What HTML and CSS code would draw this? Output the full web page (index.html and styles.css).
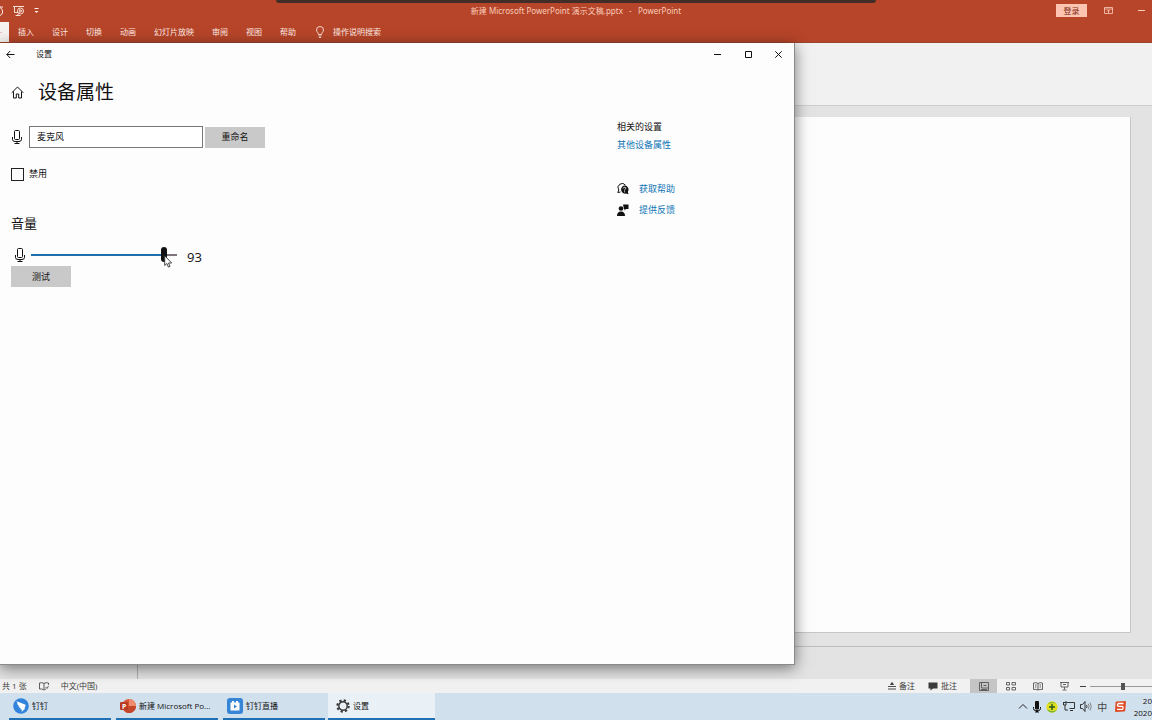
FILE: index.html
```html
<!DOCTYPE html>
<html lang="zh-CN">
<head>
<meta charset="utf-8">
<title>设置</title>
<link rel="stylesheet" href="styles.css">
</head>
<body>
<div class="desktop">
  <div class="recorder-bar"></div>
  <div class="ppt">
    <header class="ppt-title">
      <div class="quick">
        <svg class="undo" width="4" height="12" viewBox="0 0 4 12"><path d="M0 2.500Q3 4 2.600 7T0 10.500M0 2h3" fill="none" stroke="currentColor"/></svg>
        <svg width="12" height="12" viewBox="0 0 12 12" fill="none" stroke="currentColor" stroke-width=".9"><path d="M0 1.500h11M1.500 1.500v6H5M6 8.500 3.500 11M2.500 10.500h5"/><circle cx="7.500" cy="6" r="3"/><path d="M6.700 4.500v3L9 6z"/></svg>
        <svg width="5" height="6" viewBox="0 0 5 6"><path d="M.5 0h4v1h-4zM.5 3h4l-2 2z" fill="currentColor"/></svg>
      </div>
      <h1 class="doc-name">新建 Microsoft PowerPoint 演示文稿.pptx&nbsp;&nbsp; -&nbsp;&nbsp; PowerPoint</h1>
      <div class="ppt-controls">
        <button class="login">登录</button>
        <button class="plain" aria-label="功能区显示选项"><svg width="9" height="7" viewBox="0 0 9 7" fill="none" stroke="currentColor"><path d="M.5.500h8v6h-8zM0 2h9M4.500 6V3M3 4.500 4.500 3 6 4.500" stroke-width=".8"/></svg></button>
        <button class="plain" aria-label="最小化"><svg width="7" height="7" viewBox="0 0 7 7"><path d="M0 3.500h7" stroke="currentColor"/></svg></button>
      </div>
    </header>
    <nav class="tabs">
      <span class="tab-current">·</span>
      <a href="#">插入</a><a href="#">设计</a><a href="#">切换</a><a href="#">动画</a><a href="#">幻灯片放映</a><a href="#">审阅</a><a href="#">视图</a><a href="#">帮助</a>
      <a href="#" class="tell"><svg width="8" height="12" viewBox="0 0 8 12" fill="none" stroke="currentColor" stroke-width=".9"><path d="M2.500 8.500c0-2-2-2.500-2-4.500a3.500 3.500 0 0 1 7 0c0 2-2 2.500-2 4.500zM2.500 10h3M3 11.500h2"/></svg>操作说明搜索</a>
    </nav>
    <div class="ribbon"></div>
    <main class="workspace">
      <div class="thumbs"></div>
      <div class="editor">
        <div class="canvas"><div class="slide"></div></div>
        <div class="notes"></div>
      </div>
    </main>
    <footer class="status">
      <div class="status-left">
        <span>共 1 张</span>
        <svg width="10" height="9" viewBox="0 0 10 9" fill="none" stroke="currentColor" stroke-width=".8"><path d="M5 1.500v6M5 1.500Q3 0 .5 1v6Q3 6.500 5 8l2-1M5 1.500Q7 0 9.500 1v2M6.500 5 8 6.500 9.500 4"/></svg>
        <span>中文(中国)</span>
      </div>
      <div class="status-right">
        <button class="plain"><svg width="8" height="8" viewBox="0 0 8 8" stroke="currentColor" stroke-width=".9"><path d="M0 4.500h8M0 7h8M4 .5 2.500 2.500h3z" fill="currentColor"/></svg>备注</button>
        <button class="plain"><svg width="10" height="9" viewBox="0 0 10 9"><path d="M.5.500h9v6H5L2.500 8.500v-2h-2z" fill="currentColor"/></svg>批注</button>
        <div class="views">
          <button class="plain view on" aria-label="普通视图"><svg width="10" height="9" viewBox="0 0 10 9" fill="none" stroke="currentColor" stroke-width=".9"><path d="M.5.500h9v8h-9zM2.500 1v5h7M4.500 3.500h3M2 7.500h6"/></svg></button>
          <button class="plain view" aria-label="幻灯片浏览"><svg width="10" height="9" viewBox="0 0 10 9" fill="none" stroke="currentColor" stroke-width=".9"><path d="M.5.500h3v2.500h-3zM6 .5h3.500v2.500H6zM.5 5.500h3V8h-3zM6 5.500h3.500V8H6z"/></svg></button>
          <button class="plain view" aria-label="阅读视图"><svg width="10" height="9" viewBox="0 0 10 9" fill="none" stroke="currentColor" stroke-width=".9"><path d="M5 1.500Q3 0 .5 1v6.500Q3 7 5 8q2-1 4.500-.5V1Q7 0 5 1.500V8M2 3h1.500M2 5h1.500M6.500 3H8M6.500 5H8"/></svg></button>
          <button class="plain view" aria-label="幻灯片放映"><svg width="9" height="9" viewBox="0 0 9 9" fill="none" stroke="currentColor" stroke-width=".9"><path d="M0 .5h9M1 .5V5h7V.5M4.500 5v2.500M2.500 8h4M3 2.500h3"/></svg></button>
        </div>
        <button class="plain" aria-label="缩小"><svg width="6" height="7" viewBox="0 0 6 7"><path d="M0 3.500h6" stroke="currentColor"/></svg></button>
        <input class="zoom" type="range" min="0" max="100" value="54" aria-label="缩放">
      </div>
    </footer>
  </div>

  <section class="settings">
    <div class="win-bar">
      <button class="plain" aria-label="返回"><svg width="9" height="9" viewBox="0 0 9 9" fill="none" stroke="currentColor"><path d="M8.500 4.500H.8M4.200 1 .8 4.500 4.200 8"/></svg></button>
      <span class="win-name">设置</span>
      <div class="win-controls">
        <button class="plain" aria-label="最小化"><svg width="7" height="7" viewBox="0 0 7 7"><path d="M0 3.500h7" stroke="currentColor"/></svg></button>
        <button class="plain" aria-label="最大化"><svg width="7" height="7" viewBox="0 0 7 7"><path d="M.5.500h6v6h-6z" fill="none" stroke="currentColor"/></svg></button>
        <button class="plain" aria-label="关闭"><svg width="7" height="7" viewBox="0 0 7 7"><path d="M.3.300l6.400 6.400M6.700.300.300 6.700" stroke="currentColor"/></svg></button>
      </div>
    </div>
    <div class="page-head">
      <svg width="13" height="13" viewBox="0 0 13 13" fill="none" stroke="currentColor"><path d="M.7 6.800 6.500 1l5.800 5.800M2.500 5.500v6.500h2.800V8h2.400v4h2.800V5.500"/></svg>
      <h2>设备属性</h2>
    </div>
    <div class="columns">
      <div class="device">
        <div class="name-row">
          <label for="name"><svg width="12" height="16" viewBox="0 0 12 16" fill="none" stroke="currentColor"><rect x="3.500" y="1.500" width="5" height="9" rx="1"/><path d="M1.500 8v2.500q0 2 2.500 2h4q2.500 0 2.500-2V8M6 12.500V15M3.500 14.500h5"/></svg></label>
          <input id="name" type="text" value="麦克风">
          <button class="btn">重命名</button>
        </div>
        <label class="check"><input type="checkbox">禁用</label>
        <h3>音量</h3>
        <div class="vol-row">
          <label for="vol"><svg width="12" height="16" viewBox="0 0 12 16" fill="none" stroke="currentColor"><rect x="3.500" y="1.500" width="5" height="9" rx="1"/><path d="M1.500 8v2.500q0 2 2.500 2h4q2.500 0 2.500-2V8M6 12.500V15M3.500 14.500h5"/></svg></label>
          <div class="slide-wrap">
            <input id="vol" class="vol" type="range" min="0" max="100" value="93">
            <svg class="cursor" width="9" height="13" viewBox="0 0 9 13"><path d="M.7.800v9.700l2.200-2 1.500 3.600 1.600-.7L4.500 8h3.200z" fill="#fff" stroke="#333" stroke-width=".9"/></svg>
          </div>
          <output for="vol">93</output>
        </div>
        <button class="btn">测试</button>
      </div>
      <aside class="related">
        <h4>相关的设置</h4>
        <a href="#">其他设备属性</a>
        <ul>
          <li><svg width="12" height="12" viewBox="0 0 12 12"><path d="M8.500 2.200A4 4 0 1 0 1.800 7L.8 9.500 3.500 9" fill="none" stroke="#111"/><path d="M7.500 2.500a4 4 0 0 1 3.300 6.300l.7 2.500-2.500-.7A4 4 0 1 1 7.500 2.500" fill="#111"/><path d="M6.200 5.500q.3-1.300 1.500-1.200 1.300.2 1 1.300-.2.600-1.100 1.200V7.500M7.600 8.300v1" fill="none" stroke="#fff" stroke-width=".9"/></svg><a href="#">获取帮助</a></li>
          <li><svg width="12" height="12" viewBox="0 0 12 12" fill="#111"><circle cx="4" cy="4.500" r="2.300"/><path d="M0 12q0-4.500 4-4.500T8 12zM6 .5h5.500v4.500H9L7.500 6.500V5H7z"/></svg><a href="#">提供反馈</a></li>
        </ul>
      </aside>
    </div>
  </section>
</div>

<footer class="taskbar">
  <div class="tasks">
    <button class="task"><svg width="16" height="16" viewBox="0 0 16 16"><circle cx="8" cy="8" r="7.800" fill="#3183dc"/><path d="M3.500 3.300 12 6.500q1 .5.500 1.500l-1.200 2.200h1.200L8.500 14l.5-2.500H7.300l.5-1.200Q5.500 9.500 5.300 8.300l1.500.2Q4.300 7 4 5.300l1 .2Q3.500 4.300 3.500 3.300" fill="#fff"/></svg><span>钉钉</span></button>
    <button class="task"><svg width="16" height="16" viewBox="0 0 16 16"><circle cx="9" cy="8" r="7" fill="#d85435"/><path d="M9 1a7 7 0 0 1 7 7H9z" fill="#f08c6c"/><path d="M16 8a7 7 0 0 1-11 5.700L9 8z" fill="#c5472b"/><rect y="4" width="8" height="8" rx="1" fill="#b93a20"/><text x="2" y="10.500" class="p-mark">P</text></svg><span>新建 Microsoft Po...</span></button>
    <button class="task"><svg width="16" height="16" viewBox="0 0 16 16"><rect width="16" height="16" rx="3" fill="#3685d6"/><path d="M3.500 4.500h9v8h-9zM5 3h2v2H5zM9 3h2v2H9z" fill="#fff"/><path d="M7 6.500v4l3-2z" fill="#3685d6"/></svg><span>钉钉直播</span></button>
    <button class="task active"><svg width="14" height="14" viewBox="0 0 14 14" fill="none" stroke="#333"><circle cx="7" cy="7" r="5.700" stroke-width="2" stroke-dasharray="2.240 2.240"/><circle cx="7" cy="7" r="4.200" stroke-width="1.400"/></svg><span>设置</span></button>
  </div>
  <div class="tray">
    <svg width="10" height="7" viewBox="0 0 10 7"><path d="M1 5.500 5 1.500l4 4" fill="none" stroke="#222"/></svg>
    <svg width="8" height="12" viewBox="0 0 8 12"><rect x="2" y="0" width="4" height="8.500" rx="1" fill="#111"/><path d="M.5 6v1.500q0 2 2 2h3q2 0 2-2V6M2 11h4" fill="none" stroke="#111"/><path d="M4 9v2" stroke="#111" stroke-width="2"/></svg>
    <svg width="12" height="12" viewBox="0 0 12 12"><circle cx="6" cy="6" r="5.700" fill="#e3e01f"/><path d="M1 8.500A5.700 5.700 0 0 0 11 8.500Q8 10.500 6 10T1 8.500M2 3Q5-.5 10 2.500L6.500 2z" fill="#7bb535"/><path d="M6 3v6M3 6h6" stroke="#26551c" stroke-width="1.400"/></svg>
    <svg width="12" height="11" viewBox="0 0 12 11" fill="none" stroke="#222" stroke-width=".9"><path d="M3.500 1.500h8v6h-5M0 1.500h3M.5 1.500v2.500h2.500V0M2 4v5M2 9h3M7 9.500h3"/></svg>
    <svg width="12" height="11" viewBox="0 0 12 11" fill="none" stroke="#222" stroke-width=".9"><path d="M.5 3.500h2l2.500-3v10l-2.500-3h-2zM6.500 4q1 1.500 0 3"/><path d="M8.200 2.800q1.800 2.700 0 5.400M10 1.500q2.500 4 0 8" stroke="#777"/></svg>
    <span class="ime">中</span>
    <svg width="11" height="11" viewBox="0 0 11 11"><path d="M1.500.5 10 0q1 0 1 1l-.8 8.500q0 1-1 1L1 11q-1 0-1-1l.5-8.500q0-1 1-1" fill="#df4c27"/><path d="M8.500 2.500H4Q2.500 2.500 2.500 4T4 5.300h3Q8.300 5.300 8 7T6.500 8.300H2" fill="none" stroke="#fff" stroke-width="1.300"/></svg>
    <div class="clock"><span>20</span><span>2020</span></div>
  </div>
</footer>
</body>
</html>
```
FILE: styles.css
```css
* { box-sizing: border-box; }
body {
  margin: 0;
  height: 100vh;
  overflow: hidden;
  display: flex;
  flex-direction: column;
  font: 8px/12px "Open Sans", "Noto Sans CJK SC", sans-serif;
  color: #222;
}
h1, h2, h3, h4, ul { margin: 0; padding: 0; font-weight: 400; list-style: none; }
button, input { font: inherit; color: inherit; margin: 0; }
a { text-decoration: none; color: inherit; }
svg { flex: none; display: block; }
.plain {
  border: 0;
  padding: 0;
  background: none;
  display: flex;
  align-items: center;
  justify-content: center;
  gap: 3px;
}
.desktop { flex: 1; position: relative; display: flex; min-height: 0; }
.recorder-bar {
  position: absolute;
  z-index: 1;
  top: 0;
  left: 24%;
  right: 24%;
  height: 3px;
  background: #432d29;
  border-radius: 0 0 3px 3px;
}

.ppt { flex: 1; display: flex; flex-direction: column; min-width: 0; background: #e3e3e3; }
.ppt-title {
  height: 22px;
  display: grid;
  grid-template-columns: 1fr auto 1fr;
  align-items: center;
  padding-bottom: 1px;
  background: #b64529;
  color: #fccdbb;
}
.quick { display: flex; align-items: center; gap: 9px; color: #fff0ea; }
.doc-name { font-family: "Noto Sans", "Noto Sans CJK SC", sans-serif; font-size: 8px; white-space: nowrap; }
.ppt-controls { display: flex; justify-content: flex-end; align-items: center; gap: 17px; }
.ppt-controls .plain:last-child { width: 22px; }
.login { width: 31px; height: 13px; padding: 0; border: 0; background: #fcc4b1; color: #7c2b17; line-height: 12px; }
.tabs {
  height: 21px;
  display: flex;
  align-items: center;
  gap: 18px;
  background: #b64529;
  color: #ffeae2;
  border-bottom: 1px solid #9d4530;
  white-space: nowrap;
}
.tab-current { align-self: stretch; width: 9px; margin-right: -9px; background: #f5f2f0; color: #b64529; line-height: 20px; }
.tell { display: flex; align-items: center; gap: 9px; margin-left: 2px; }
.ribbon { height: 63px; background: #f1f1f1; border-bottom: 1px solid #cfcfcf; }
.workspace { flex: 1; display: flex; min-height: 0; }
.thumbs { width: 138px; border-right: 1px solid #b0b0b0; }
.editor { flex: 1; display: flex; flex-direction: column; }
.canvas { flex: 1; display: flex; padding: 11px 21px 13px; border-bottom: 1px solid #bdbdbd; }
.slide { flex: 1; background: #fdfdfd; border: 1px solid #c6c6c6; border-width: 0 1px 1px 0; }
.notes { height: 32px; }
.status {
  height: 14px;
  display: flex;
  align-items: center;
  justify-content: space-between;
  background: #f1f1f1;
  color: #3b3b3b;
}
.status-left { display: flex; align-items: center; gap: 12px; padding-left: 2px; }
.status-right { display: flex; align-items: center; align-self: stretch; gap: 13px; }
.views { display: flex; align-self: stretch; margin-right: -11px; }
.view { width: 27px; color: #555; }
.view.on { background: #c5c5c5; }
.zoom { width: 62px; height: 10px; margin-left: -9px; appearance: none; background: none; }
.zoom::-webkit-slider-runnable-track { height: 1px; background: #999; }
.zoom::-webkit-slider-thumb { appearance: none; width: 4px; height: 7px; margin-top: -3px; background: #555; }

.settings {
  position: absolute;
  z-index: 2;
  left: 0;
  top: 43px;
  bottom: 28px;
  width: 69%;
  background: #fdfdfd;
  border: 1px solid #8a8a8a;
  border-width: 0 1px 1px 0;
  box-shadow: 0 3px 14px rgba(0, 0, 0, .5);
  color: #111;
  font-size: 9px;
}
.win-bar { height: 22px; padding-left: 6px; display: flex; align-items: center; }
.win-name { flex: 1; margin-left: 21px; font-size: 8px; }
.win-controls { display: flex; }
.win-controls .plain { width: 31px; height: 22px; }
.win-controls .plain:last-child { width: 30px; }
.page-head { display: flex; align-items: center; gap: 14px; height: 28px; margin-top: 13px; padding-left: 11px; }
.page-head h2 { font-size: 19px; line-height: 28px; }
.columns { display: grid; grid-template-columns: 1fr 177px; padding: 15px 0 0 11px; }
.device { display: flex; flex-direction: column; align-items: flex-start; padding-top: 5px; }
.name-row { display: flex; align-items: center; }
.name-row input { width: 174px; height: 22px; margin: 0 2px 0 6px; padding: 0 7px 2px; border: 1px solid #777; background: #fff; }
.btn { width: 60px; height: 21px; border: 0; padding: 0; background: #c9c9c9; }
.check { display: flex; align-items: center; gap: 5px; height: 14px; margin-top: 19px; }
.check input { appearance: none; width: 13px; height: 13px; border: 1px solid #222; }
.device h3 { margin-top: 32px; font-size: 13px; line-height: 20px; }
.vol-row { display: flex; align-items: center; height: 18px; margin-top: 13px; padding-left: 3px; }
.slide-wrap { position: relative; display: flex; margin: 0 10px 0 5px; }
.vol { width: 146px; height: 16px; appearance: none; background: none; }
.vol::-webkit-slider-runnable-track { height: 2px; background: linear-gradient(90deg, #1f6fae 93%, #80747c 93%); }
.vol::-webkit-slider-thumb { appearance: none; width: 6px; height: 15px; margin-top: -7px; border-radius: 3px; background: #111; }
.cursor { position: absolute; left: 91%; top: 8px; }
.vol-row output { font-size: 13px; line-height: 18px; padding-top: 4px; }
.device > .btn { margin-top: 2px; }
.related a { color: #0e74b5; }
.related > a { display: block; margin-top: 6px; }
.related h4 { font-size: 9px; }
.related ul { display: grid; gap: 9px; margin-top: 32px; }
.related li { display: flex; align-items: center; gap: 10px; }

.taskbar { height: 27px; display: flex; justify-content: space-between; background: #d1e0ed; color: #111; }
.tasks { display: flex; gap: 5px; padding-left: 9px; }
.task {
  width: 102px;
  display: flex;
  align-items: center;
  gap: 3px;
  padding: 0 4px;
  border: 0;
  border-bottom: 2px solid #1f70b5;
  background: none;
  white-space: nowrap;
}
.task.active { width: 107px; margin-left: -2px; padding-left: 8px; background: #e9f0f6; }
.p-mark { font: bold 7px "Open Sans", sans-serif; fill: #fff; }
.tray { display: flex; align-items: center; gap: 5px; }
.ime { width: 11px; margin-right: 2px; font-size: 10px; text-align: center; color: #444; }
.clock { display: flex; flex-direction: column; align-items: flex-end; margin-left: 3px; }
```
